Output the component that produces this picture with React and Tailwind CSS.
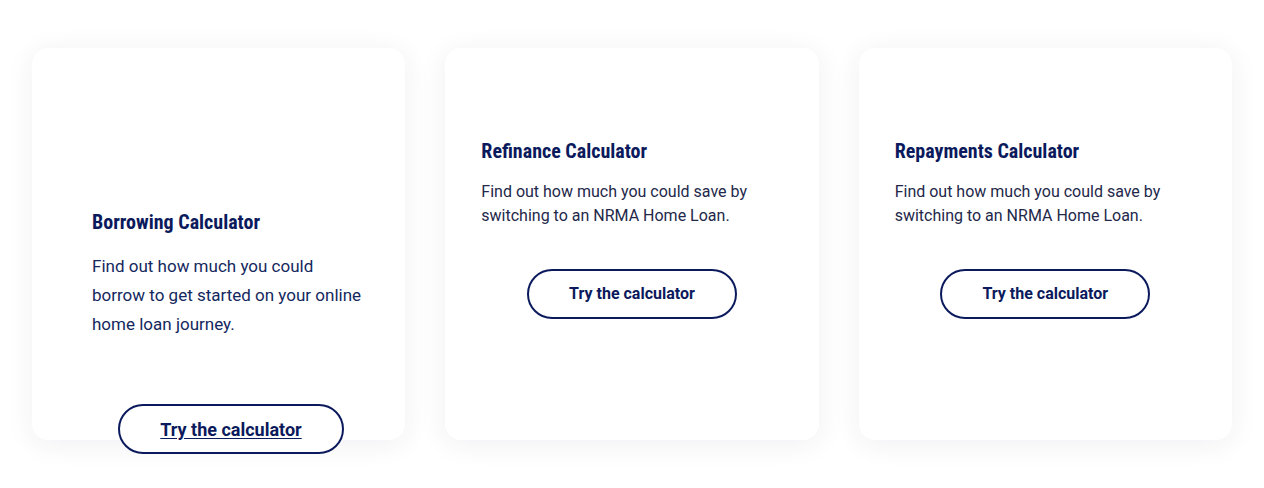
import React from 'react';

const titleCls =
  "font-['Roboto',sans-serif] font-stretch-[75%] text-[20px] font-bold leading-7 text-[#0b1a5c]";

function SmallCard({ title, text }) {
  return (
    <div className="h-[392px] rounded-2xl bg-white px-9 pt-[89px] shadow-[0_4px_28px_rgba(40,40,90,0.07)]">
      <h3 className={titleCls}>{title}</h3>
      <p className="mt-[15px] text-[16px] leading-6 text-[#23284a]">{text}</p>
      <div className="mt-[41px] flex justify-center">
        <a
          href="#/"
          onClick={e => e.preventDefault()}
          className="flex h-[50px] w-[210px] items-center justify-center rounded-full border-2 border-[#0b1a5c] text-[16px] font-bold text-[#0b1a5c]"
        >
          Try the calculator
        </a>
      </div>
    </div>
  );
}

export default function App() {
  return (
    <div className="min-h-[488px] bg-white pt-12 font-['Roboto',sans-serif]">
      <div className="grid grid-cols-3 gap-10 px-8">
        <div className="h-[392px] rounded-2xl bg-white pl-[60px] pr-10 pt-[160px] shadow-[0_4px_28px_rgba(40,40,90,0.07)]">
          <h3 className={titleCls}>Borrowing Calculator</h3>
          <p className="mt-[16px] text-[17px] leading-[29px] text-[#14285e]">
            Find out how much you could
            <br />
            borrow to get started on your online
            <br />
            home loan journey.
          </p>
          <a
            href="#/"
            onClick={e => e.preventDefault()}
            className="ml-[26px] mt-[65px] flex h-[50px] w-[226px] items-center justify-center rounded-full border-2 border-[#0b1a5c] bg-white text-[18px] font-bold text-[#0b1a5c] underline underline-offset-2"
          >
            Try the calculator
          </a>
        </div>
        <SmallCard
          title="Refinance Calculator"
          text={
            <>
              Find out how much you could save by
              <br />
              switching to an NRMA Home Loan.
            </>
          }
        />
        <SmallCard
          title="Repayments Calculator"
          text={
            <>
              Find out how much you could save by
              <br />
              switching to an NRMA Home Loan.
            </>
          }
        />
      </div>
    </div>
  );
}
